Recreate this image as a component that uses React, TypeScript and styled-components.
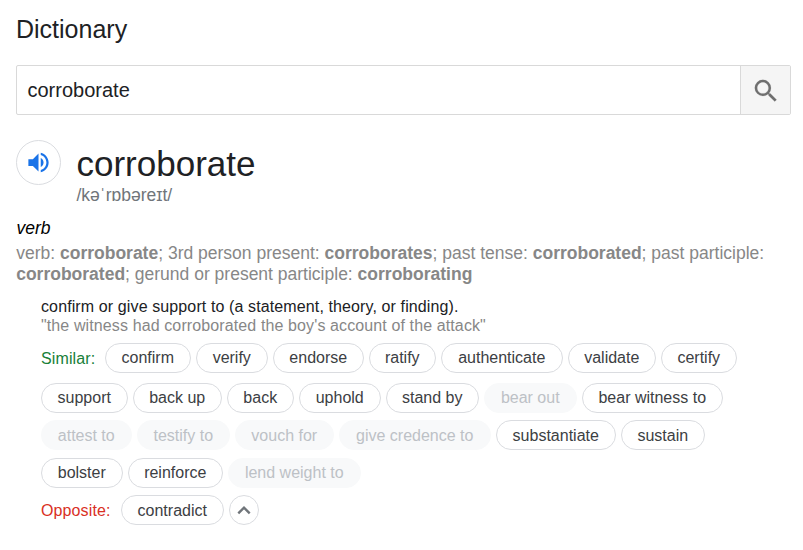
import React from "react";
import styled, { createGlobalStyle } from "styled-components";

const Global = createGlobalStyle`
  * { box-sizing: border-box; }
  body { margin: 0; background: #fff; font-family: "Liberation Sans", Arial, sans-serif; color: #202124; }
`;
const Page = styled.main`
  width: 803px; height: 550px; padding: 15px 12px 0 16px; overflow: hidden;
`;
const Title = styled.h1`
  margin: 0; font-size: 25px; font-weight: 400; line-height: 29px; height: 50px;
`;
const Search = styled.div`
  display: flex; height: 50px; border: 1px solid #d9d9d9; border-radius: 2px;
`;
const Query = styled.div`
  flex: 1; padding-left: 10.5px; font-size: 20px; line-height: 48px;
`;
const SearchButton = styled.button`
  width: 50px; border: 0; border-left: 1px solid #d9d9d9; background: #f5f5f5; padding: 1px 0 0;
  display: flex; align-items: center; justify-content: center;
`;
const Head = styled.section`
  display: flex; gap: 15.5px; margin-top: 25px; height: 77px;
`;
const Speaker = styled.button`
  width: 45px; height: 45px; border: 1px solid #dadce0; border-radius: 50%; background: #fff; padding: 0;
  display: flex; align-items: center; justify-content: center;
`;
const Word = styled.div`font-size: 35px; line-height: 47px; height: 44px;`;
const Phonetic = styled.div`font-size: 17.5px; line-height: 22px; color: #70757a;`;
const Part = styled.div`font-size: 17.5px; font-style: italic; line-height: 22px; height: 26px; padding-left: 0.5px; color: #000;`;
const Forms = styled.div`font-size: 17.5px; line-height: 21px; padding-left: 0.2px; color: #878787; white-space: nowrap;`;
const Sense = styled.section`margin: 12px 0 0 25px; font-size: 16px; line-height: 19px;`;
const Definition = styled.div`letter-spacing: 0.115px;`;
const Example = styled.div`color: #878787; letter-spacing: 0.115px;`;
const Row = styled.div<{ $top: number; $lower?: boolean }>`
  display: flex; gap: 5px; height: 30px; margin-top: ${p => p.$top}px;
  line-height: ${p => (p.$lower ? 30 : 28)}px;
`;
const Label = styled.div<{ $color: string; $w: number }>`
  width: ${p => p.$w}px; line-height: 32px; color: ${p => p.$color}; letter-spacing: 0.12px;
`;
const Chip = styled.span<{ $muted?: boolean; $w: number }>`
  width: ${p => p.$w}px; height: 30px; padding-right: 0.5px; border-radius: 15px; text-align: center; white-space: nowrap;
  border: 1px solid ${p => (p.$muted ? "#f8f9fa" : "#dadce0")};
  background: ${p => (p.$muted ? "#f8f9fa" : "#fff")};
  color: ${p => (p.$muted ? "#bdc1c6" : "#3c4043")};
`;
const Collapse = styled.button`
  width: 30px; height: 30px; border: 1px solid #dadce0; border-radius: 50%; background: #fff; padding: 0 1px 0 0;
  display: flex; align-items: center; justify-content: center;
`;

type Item = [string, number, boolean?];
const first: Item[] = [["confirm", 86], ["verify", 72], ["endorse", 91], ["ratify", 67], ["authenticate", 122], ["validate", 88], ["certify", 76]];
const rows: { top: number; lower?: boolean; items: Item[] }[] = [
  { top: 10, items: [["support", 87], ["back up", 89], ["back", 67], ["uphold", 82], ["stand by", 93], ["bear out", 93, true], ["bear witness to", 141]] },
  { top: 7, lower: true, items: [["attest to", 91, true], ["testify to", 93, true], ["vouch for", 99, true], ["give credence to", 152, true], ["substantiate", 120], ["sustain", 84]] },
  { top: 8, items: [["bolster", 82], ["reinforce", 95], ["lend weight to", 133, true]] },
];
const chips = (items: Item[]) => items.map(([t, w, m]) => <Chip key={t} $w={w} $muted={m}>{t}</Chip>);

export default function App() {
  return (
    <>
      <Global />
      <Page>
        <Title>Dictionary</Title>
        <Search>
          <Query>corroborate</Query>
          <SearchButton aria-label="Search">
            <svg width="30" height="30" viewBox="0 0 24 24" fill="#6f6f6f" stroke="#6f6f6f" strokeWidth="0.1"><path d="M15.5 14h-.79l-.28-.27A6.47 6.47 0 0 0 16 9.5 6.5 6.5 0 1 0 9.5 16c1.61 0 3.09-.59 4.23-1.57l.27.28v.79l5 4.99L20.49 19l-4.99-5zm-6 0C7.01 14 5 11.99 5 9.5S7.01 5 9.5 5 14 7.01 14 9.5 11.99 14 9.500 14z" /></svg>
          </SearchButton>
        </Search>
        <Head>
          <Speaker aria-label="Listen">
            <svg width="27" height="27" viewBox="0 0 24 24" fill="#1a73e8"><path d="M3 9v6h4l5 5V4L7 9H3zm13.500 3c0-1.770-1.020-3.290-2.500-4.030v8.050c1.480-.730 2.500-2.250 2.500-4.020zM14 3.230v2.060c2.890.860 5 3.540 5 6.710s-2.110 5.850-5 6.710v2.060c4.010-.910 7-4.490 7-8.770s-2.990-7.860-7-8.770z" /></svg>
          </Speaker>
          <div>
            <Word>corroborate</Word>
            <Phonetic>/kəˈrɒbəreɪt/</Phonetic>
          </div>
        </Head>
        <Part>verb</Part>
        <Forms>
          verb: <b>corroborate</b>; 3rd person present: <b>corroborates</b>; past tense: <b>corroborated</b>; past participle:<br />
          <b>corroborated</b>; gerund or present participle: <b>corroborating</b>
        </Forms>
        <Sense>
          <Definition>confirm or give support to (a statement, theory, or finding).</Definition>
          <Example>"the witness had corroborated the boy's account of the attack"</Example>
          <Row $top={8}><Label $color="#188038" $w={59}>Similar:</Label>{chips(first)}</Row>
          {rows.map((r, i) => <Row key={i} $top={r.top} $lower={r.lower}>{chips(r.items)}</Row>)}
          <Row $top={7} $lower>
            <Label $color="#d93025" $w={75}>Opposite:</Label>
            <Chip $w={103}>contradict</Chip>
            <Collapse aria-label="Show less">
              <svg width="14" height="10" viewBox="0 0 14 10" fill="none" stroke="#70757a" strokeWidth="2.4"><path d="M1.300 8.300L7 2.700L12.700 8.300" /></svg>
            </Collapse>
          </Row>
        </Sense>
      </Page>
    </>
  );
}
